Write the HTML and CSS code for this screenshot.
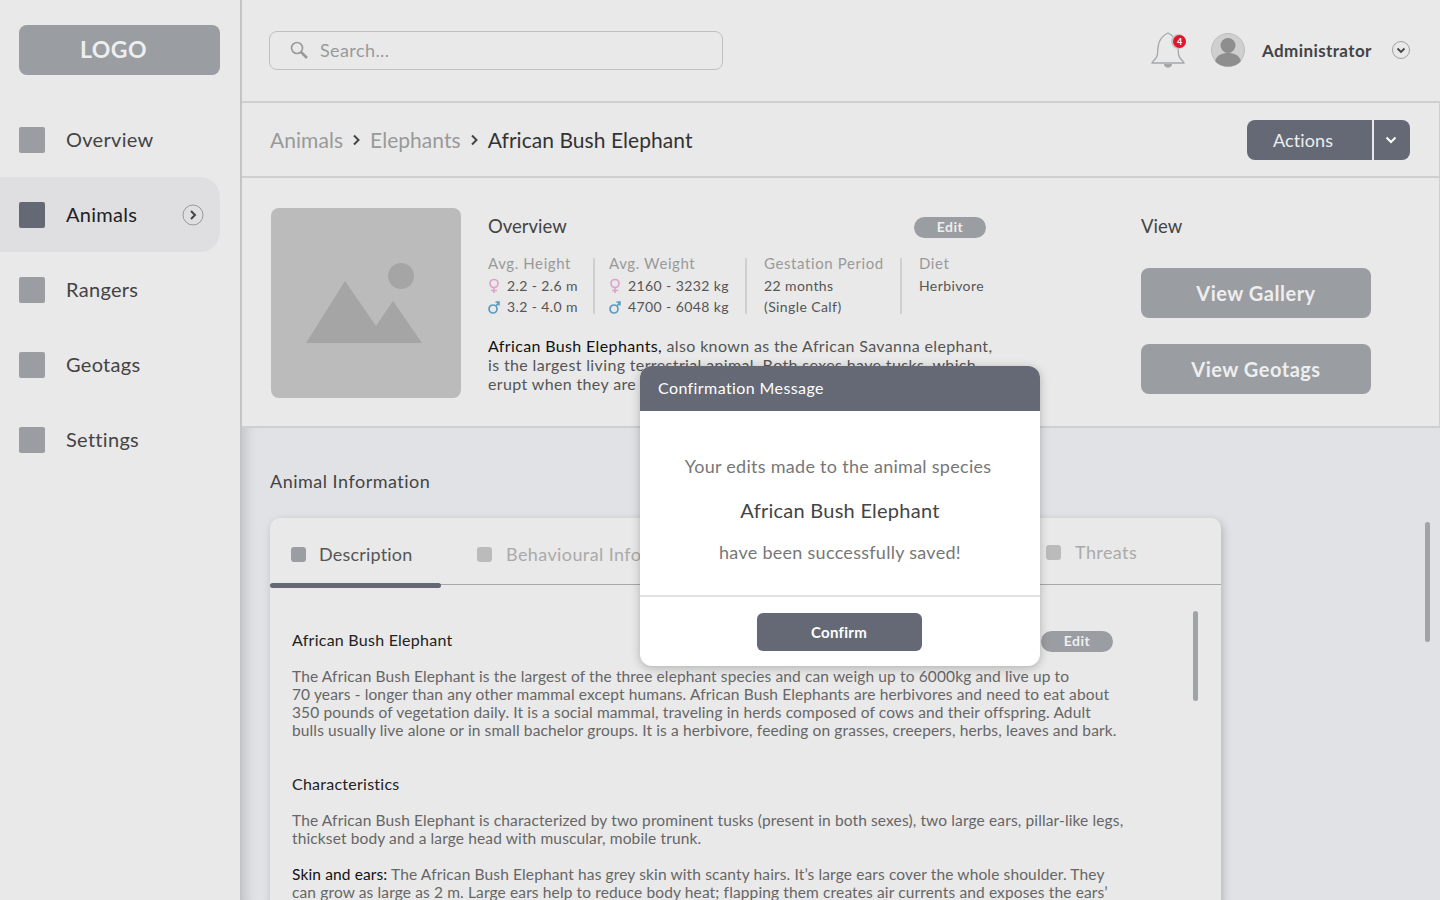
FILE: index.html
```html
<!DOCTYPE html>
<html lang="en">
<head>
  <meta charset="UTF-8" />
  <meta name="viewport" content="width=device-width, initial-scale=1.0"/>
  <title>African Bush Elephant</title>
  <link rel="stylesheet" href="styles.css">
</head>
<body>
  <aside class="sidebar">
    <div class="logo">LOGO</div>
    <nav class="side-nav">
      <a class="side-link"><span class="side-icon"></span>Overview</a>
      <a class="side-link active"><span class="side-icon"></span>Animals
        <svg class="side-arrow" width="22" height="22" viewBox="0 0 22 22"><circle cx="11" cy="11" r="10" fill="none" stroke="#9a9a9a"/><path d="M9 7l4 4-4 4" fill="none" stroke="#444" stroke-width="2"/></svg>
      </a>
      <a class="side-link"><span class="side-icon"></span>Rangers</a>
      <a class="side-link"><span class="side-icon"></span>Geotags</a>
      <a class="side-link"><span class="side-icon"></span>Settings</a>
    </nav>
  </aside>

  <div class="page">
    <header class="topbar">
      <div class="search">
        <svg width="20" height="20" viewBox="0 0 20 20"><circle cx="8" cy="8" r="5.500" fill="none" stroke="#999" stroke-width="1.600"/><path d="M12 12l6 6" stroke="#999" stroke-width="2.600"/></svg>
        <span>Search...</span>
      </div>
      <div class="user-area">
        <div class="bell">
          <svg width="36" height="40" viewBox="0 0 36 40"><path d="M2 33c0-2 5-3 5.500-9 .5-7 0-16 10.500-21 10 5 10 14 10.500 21 .5 6 5.500 7 5.500 9z" fill="none" stroke="#a4a7ab" stroke-width="1.300"/><path d="M14 34h8c0 5-8 5-8 0z" fill="#a4a7ab"/></svg>
          <span class="bell-count">4</span>
        </div>
        <svg class="avatar" width="34" height="34" viewBox="0 0 34 34"><circle cx="17" cy="17" r="16.500" fill="#cfcfcf" stroke="#bdbdbd"/><circle cx="17" cy="12.500" r="7.500" fill="#8e8e8e"/><path d="M4 28c2-6 7-8 13-8s11 2 13 8c-3 4-8 5.500-13 5.500S7 32 4 28z" fill="#8e8e8e"/></svg>
        <span class="user-name">Administrator</span>
        <svg width="18" height="18" viewBox="0 0 18 18"><circle cx="9" cy="9" r="8.500" fill="none" stroke="#a0a0a0"/><path d="M5.500 7.500L9 11l3.500-3.500" fill="none" stroke="#444" stroke-width="1.800"/></svg>
      </div>
    </header>

    <div class="crumbbar">
      <div class="crumbs">
        <span>Animals</span>
        <svg class="crumb-sep" width="9" height="12" viewBox="0 0 9 12"><path d="M2 1.500L6.500 6 2 10.500" fill="none" stroke="#444" stroke-width="2"/></svg>
        <span>Elephants</span>
        <svg class="crumb-sep" width="9" height="12" viewBox="0 0 9 12"><path d="M2 1.500L6.500 6 2 10.500" fill="none" stroke="#444" stroke-width="2"/></svg>
        <span class="current">African Bush Elephant</span>
      </div>
      <div class="actions">
        <span class="actions-label">Actions</span>
        <span class="actions-arrow"><svg width="12" height="8" viewBox="0 0 12 8"><path d="M1.500 1.500L6 6l4.500-4.500" fill="none" stroke="#fff" stroke-width="2"/></svg></span>
      </div>
    </div>

    <section class="summary">
      <div class="photo">
        <svg class="photo-icon" width="116" height="82" viewBox="0 0 116 82"><circle cx="95" cy="14" r="13" fill="#a5a5a5"/><path d="M0 81L39 19l31 45 17-25 29 42z" fill="#a5a5a5"/></svg>
      </div>
      <div class="overview">
        <div class="overview-head">
          <h2>Overview</h2>
          <span class="pill">Edit</span>
        </div>
        <div class="stats">
          <div class="stat stat-height">
            <h3>Avg. Height</h3>
            <p><svg class="gender" width="12" height="16" viewBox="0 0 12 16"><circle cx="6" cy="5.500" r="4" fill="none" stroke="#dfa3c9" stroke-width="1.700"/><path d="M6 9.500V15M3 12.500h6" stroke="#dfa3c9" stroke-width="1.700"/></svg>2.2 - 2.6 m</p>
            <p><svg class="gender" width="12" height="16" viewBox="0 0 12 16"><circle cx="5" cy="10" r="4" fill="none" stroke="#5b9bc2" stroke-width="1.700"/><path d="M8 7l3-4M7.500 3H11v3.500" fill="none" stroke="#5b9bc2" stroke-width="1.500"/></svg>3.2 - 4.0 m</p>
          </div>
          <div class="stat stat-weight">
            <h3>Avg. Weight</h3>
            <p><svg class="gender" width="12" height="16" viewBox="0 0 12 16"><circle cx="6" cy="5.500" r="4" fill="none" stroke="#dfa3c9" stroke-width="1.700"/><path d="M6 9.500V15M3 12.500h6" stroke="#dfa3c9" stroke-width="1.700"/></svg>2160 - 3232 kg</p>
            <p><svg class="gender" width="12" height="16" viewBox="0 0 12 16"><circle cx="5" cy="10" r="4" fill="none" stroke="#5b9bc2" stroke-width="1.700"/><path d="M8 7l3-4M7.500 3H11v3.500" fill="none" stroke="#5b9bc2" stroke-width="1.500"/></svg>4700 - 6048 kg</p>
          </div>
          <div class="stat stat-period">
            <h3>Gestation Period</h3>
            <p>22 months</p>
            <p>(Single Calf)</p>
          </div>
          <div class="stat stat-diet">
            <h3>Diet</h3>
            <p>Herbivore</p>
          </div>
        </div>
        <p class="intro"><strong>African Bush Elephants,</strong> also known as the African Savanna elephant,<br>is the largest living terrestrial animal. Both sexes have tusks, which<br>erupt when they are</p>
      </div>
      <div class="view">
        <h2>View</h2>
        <a class="view-btn">View Gallery</a>
        <a class="view-btn">View Geotags</a>
      </div>
    </section>

    <main class="details">
      <h2 class="details-title">Animal Information</h2>
      <div class="card">
        <div class="tabs">
          <div class="tab tab-active"><span class="tab-icon"></span>Description</div>
          <div class="tab tab-behaviour"><span class="tab-icon"></span>Behavioural Info</div>
          <div class="tab tab-threats"><span class="tab-icon"></span>Threats</div>
        </div>
        <div class="card-body">
          <div class="card-head">
            <h3>African Bush Elephant</h3>
            <span class="pill">Edit</span>
          </div>
          <p>The African Bush Elephant is the largest of the three elephant species and can weigh up to 6000kg and live up to<br>70 years - longer than any other mammal except humans. African Bush Elephants are herbivores and need to eat about<br>350 pounds of vegetation daily. It is a social mammal, traveling in herds composed of cows and their offspring. Adult<br>bulls usually live alone or in small bachelor groups. It is a herbivore, feeding on grasses, creepers, herbs, leaves and bark.</p>
          <h3 class="section-gap">Characteristics</h3>
          <p>The African Bush Elephant is characterized by two prominent tusks (present in both sexes), two large ears, pillar-like legs,<br>thickset body and a large head with muscular, mobile trunk.</p>
          <p class="para-gap"><strong>Skin and ears:</strong> The African Bush Elephant has grey skin with scanty hairs. It’s large ears cover the whole shoulder. They<br>can grow as large as 2 m. Large ears help to reduce body heat; flapping them creates air currents and exposes the ears’</p>
        </div>
        <span class="card-scroll"></span>
      </div>
      <span class="page-scroll"></span>
    </main>
  </div>

  <div class="modal">
    <div class="modal-head">Confirmation Message</div>
    <div class="modal-body">
      <p class="modal-line-one">Your edits made to the animal species</p>
      <p class="modal-name">African Bush Elephant</p>
      <p>have been successfully saved!</p>
    </div>
    <div class="modal-foot">
      <a class="confirm">Confirm</a>
    </div>
  </div>
</body>
</html>
```

FILE: styles.css
```css
* {
  box-sizing: border-box;
}
body {
  font-family: 'Lato', 'Open Sans', sans-serif;
  background-color: #e9e9e9;
  color: #444;
  margin: 0;
  width: 1440px;
  height: 900px;
  overflow: hidden;
  display: flex;
}
h2, h3, p {
  margin: 0;
  font-weight: normal;
}
strong {
  font-weight: normal;
  color: #111;
}

/* sidebar */
.sidebar {
  width: 242px;
  flex: none;
  border-right: 2px solid #c4c4c4;
  padding-top: 25px;
}
.logo {
  width: 201px;
  height: 50px;
  margin-left: 19px;
  background-color: #9a9da2;
  border-radius: 8px;
  color: #eee;
  font-size: 23px;
  font-weight: bold;
  line-height: 48px;
  text-align: center;
  padding-right: 12px;
  letter-spacing: 0.5px;
}
.side-nav {
  margin-top: 27px;
}
.side-link {
  display: flex;
  align-items: center;
  width: 220px;
  height: 75px;
  padding: 0 0 2px 19px;
  font-size: 20px;
  letter-spacing: 0.3px;
  color: #444;
  border-radius: 0 20px 20px 0;
}
.side-icon {
  width: 26px;
  height: 26px;
  margin: 2px 21px 0 0;
  background-color: #9a9da2;
  border-radius: 2px;
}
.side-link.active {
  background-color: #dfdfe1;
  color: #222;
}
.side-link.active .side-icon {
  background-color: #646975;
}
.side-arrow {
  margin: 2px 16px 0 auto;
}

/* top bars */
.page {
  width: 1198px;
  flex: none;
  display: flex;
  flex-direction: column;
  position: relative;
}
.topbar {
  height: 103px;
  flex: none;
  border-bottom: 2px solid #cfcfcf;
  display: flex;
  align-items: center;
  justify-content: space-between;
  padding: 0 30px 1px 27px;
}
.search {
  width: 454px;
  height: 39px;
  border: 1px solid #c0c0c0;
  border-radius: 8px;
  display: flex;
  align-items: center;
  gap: 11px;
  padding-left: 19px;
  font-size: 18px;
  letter-spacing: 0.4px;
  color: #999;
}
.user-area {
  display: flex;
  align-items: center;
}
.bell {
  position: relative;
  width: 36px;
  height: 40px;
  margin-right: 25px;
}
.bell-count {
  position: absolute;
  top: 5px;
  left: 23px;
  width: 13px;
  height: 13px;
  border-radius: 50%;
  background-color: #e0162b;
  color: #fff;
  font-size: 9px;
  font-weight: bold;
  line-height: 13px;
  text-align: center;
  box-shadow: -1px 0 0 1px #c4c4c4;
}
.user-name {
  width: 130px;
  margin-left: 17px;
  font-size: 17px;
  font-weight: bold;
  letter-spacing: 0.4px;
  color: #444;
}
.crumbbar {
  height: 75px;
  flex: none;
  border-bottom: 2px solid #cfcfcf;
  border-right: 1px solid #cfcfcf;
  display: flex;
  align-items: center;
  justify-content: space-between;
  padding: 0 29px 0 28px;
}
.crumbs {
  display: flex;
  align-items: center;
  gap: 9px;
  font-size: 21px;
  letter-spacing: 0.05px;
  color: #999;
}
.crumbs .current {
  color: #333;
}
.actions {
  display: flex;
  height: 40px;
  background-color: #646975;
  border-radius: 8px;
  color: #eee;
  overflow: hidden;
}
.actions-label {
  width: 125px;
  padding-left: 26px;
  font-size: 18px;
  letter-spacing: 0.1px;
  line-height: 41px;
}
.actions-arrow {
  width: 38px;
  border-left: 2px solid #e9e9e9;
  display: flex;
  align-items: center;
  justify-content: center;
  padding-right: 2px;
}

/* overview */
.summary {
  height: 250px;
  flex: none;
  border-bottom: 2px solid #cfcfcf;
  border-right: 1px solid #cfcfcf;
  display: flex;
  padding: 30px 0 0 29px;
}
.photo {
  width: 190px;
  height: 190px;
  flex: none;
  background-color: #bbb;
  border-radius: 8px;
  display: flex;
  align-items: center;
  justify-content: center;
}
.photo-icon {
  margin-right: 4px;
}
.overview {
  width: 653px;
  flex: none;
  margin-left: 27px;
}
.overview-head {
  width: 498px;
  display: flex;
  align-items: flex-start;
  justify-content: space-between;
  height: 36px;
}
.overview h2, .view h2 {
  font-size: 18.500px;
  line-height: 36px;
  color: #444;
}
.overview-head .pill {
  margin-top: 9px;
}
.pill {
  width: 72px;
  height: 21px;
  background-color: #9a9da2;
  border-radius: 11px;
  color: #eee;
  font-size: 14px;
  font-weight: bold;
  letter-spacing: 0.5px;
  line-height: 20px;
  text-align: center;
}
.stats {
  display: flex;
  margin-top: 14px;
}
.stat {
  height: 56px;
  font-size: 14px;
  letter-spacing: 0.4px;
  line-height: 21px;
  color: #555;
  border-right: 2px solid #cfcfcf;
  margin-right: 14px;
}
.stat h3 {
  font-size: 15px;
  letter-spacing: 0.6px;
  color: #999;
  line-height: 21px;
  margin: -5px 0 1px;
}
.stat-height { width: 107px; }
.stat-weight { width: 138px; margin-right: 17px; }
.stat-period { width: 138px; margin-right: 17px; }
.stat-diet { border-right: none; }
.gender {
  margin-right: 7px;
  vertical-align: -3px;
}
.intro {
  margin-top: 22px;
  font-size: 16px;
  letter-spacing: 0.36px;
  line-height: 19px;
  color: #555;
}

/* view */
.view h2 {
  height: 36px;
}
.view-btn {
  display: block;
  width: 230px;
  height: 50px;
  margin-top: 24px;
  background-color: #9a9da2;
  border-radius: 8px;
  color: #eee;
  font-size: 20px;
  font-weight: bold;
  line-height: 50px;
  text-align: center;
  letter-spacing: 0.500px;
}
.view-btn + .view-btn {
  margin-top: 26px;
}

/* lower area */
.details {
  flex: 1;
  background-color: #e0e2e6;
  box-shadow: inset 14px 0 12px -10px rgba(0, 0, 0, 0.14);
  padding: 42px 0 0 28px;
  position: relative;
  overflow: hidden;
}
.details-title {
  font-size: 18px;
  letter-spacing: 0.5px;
  color: #444;
  line-height: 22px;
}
.card {
  position: relative;
  width: 951px;
  height: 420px;
  margin-top: 26px;
  background-color: #e9e9e9;
  border-radius: 10px;
  box-shadow: 2px 3px 10px rgba(0, 0, 0, 0.2);
}
.tabs {
  height: 67px;
  display: flex;
  align-items: center;
  padding-top: 6px;
  border-bottom: 1px solid #a8a8a8;
  font-size: 18px;
  letter-spacing: 0.4px;
  color: #aaa;
  position: relative;
}
.tab {
  display: flex;
  align-items: center;
  padding-left: 21px;
}
.tab-icon {
  width: 15px;
  height: 15px;
  margin-right: 14px;
  background-color: #bbb;
  border-radius: 3px;
}
.tab-active {
  width: 171px;
  color: #555;
  letter-spacing: 0.2px;
}
.tab-active .tab-icon {
  background-color: #9a9da2;
  margin-right: 13px;
}
.tab-active::after {
  content: "";
  position: absolute;
  left: 0;
  bottom: -4px;
  width: 171px;
  height: 5px;
  background-color: #646975;
  border-radius: 3px;
}
.tab-behaviour {
  margin-left: 15px;
}
.tab-threats {
  margin-left: auto;
  width: 196px;
  margin-bottom: 4px;
}
.card-body {
  padding: 44px 0 0 22px;
  font-size: 15.500px;
  letter-spacing: 0.13px;
  line-height: 18px;
  color: #666;
}
.card-head {
  display: flex;
  align-items: center;
  justify-content: space-between;
  width: 821px;
  height: 22px;
  margin-bottom: 16px;
}
.card-head .pill {
  margin-top: 2px;
}
.card-body h3 {
  font-size: 16px;
  letter-spacing: 0.25px;
  color: #222;
}
.section-gap {
  margin: 36px 0 18px;
}
.para-gap {
  margin-top: 18px;
}
.card-scroll {
  position: absolute;
  left: 923px;
  top: 93px;
  width: 5px;
  height: 90px;
  background-color: #a0a3a8;
  border-radius: 3px;
}
.page-scroll {
  position: absolute;
  left: 1183px;
  top: 94px;
  width: 5px;
  height: 120px;
  background-color: #a0a3a8;
  border-radius: 3px;
}

/* modal */
.modal {
  position: absolute;
  left: 640px;
  top: 366px;
  width: 400px;
  height: 300px;
  background-color: #fff;
  border-radius: 12px;
  overflow: hidden;
  box-shadow: 0 2px 10px rgba(0, 0, 0, 0.25);
}
.modal-head {
  height: 45px;
  background-color: #646975;
  color: #fff;
  font-size: 16px;
  letter-spacing: 0.4px;
  line-height: 44px;
  padding-left: 18px;
}
.modal-body {
  height: 186px;
  border-bottom: 2px solid #e2e2e2;
  padding-top: 43px;
  text-align: center;
  font-size: 18px;
  letter-spacing: 0.28px;
  line-height: 24px;
  color: #777;
}
.modal-line-one {
  padding-right: 4px;
}
.modal-name {
  margin: 20px 0 18px;
  font-size: 20px;
  letter-spacing: 0.25px;
  color: #444;
}
.modal-foot {
  padding: 16px 2px 0 0;
  text-align: center;
}
.confirm {
  display: block;
  width: 165px;
  height: 38px;
  margin: 0 auto;
  background-color: #646975;
  border-radius: 6px;
  color: #fff;
  font-size: 15px;
  font-weight: bold;
  letter-spacing: 0.3px;
  line-height: 39px;
}
```
